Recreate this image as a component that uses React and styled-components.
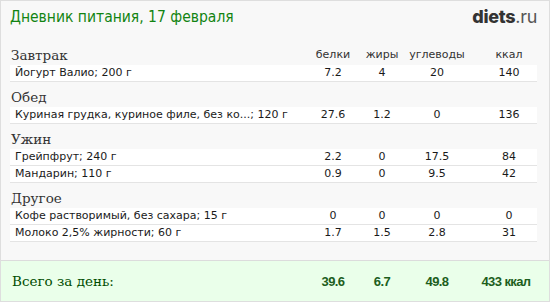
import React from "react";
import styled, { createGlobalStyle } from "styled-components";

const Global = createGlobalStyle`
  html, body { margin: 0; padding: 0; background: #ffffff; }
  * { box-sizing: border-box; }
`;

const Frame = styled.div`
  width: 550px;
  height: 302px;
  border: 1px solid #dedede;
  background: #f8f8f8;
  display: flex;
  flex-direction: column;
  overflow: hidden;
`;

const Header = styled.div`
  display: flex;
  justify-content: space-between;
  align-items: flex-start;
  height: 39px;
  padding: 5px 12px 0 9px;
`;

const Title = styled.h1`
  margin: 0;
  font-family: "DejaVu Sans Condensed", "DejaVu Sans", sans-serif;
  font-weight: normal;
  font-size: 15.5px;
  line-height: 22px;
  color: #128412;
`;

const Logo = styled.div`
  font-family: Inter, "Open Sans", sans-serif;
  font-size: 18px;
  line-height: 22px;
  color: #3a3a3a;
  letter-spacing: -0.3px;
  b { font-weight: 800; color: #333; }
  span { font-weight: 400; color: #555; }
`;

const Content = styled.div`
  padding: 0 12px 0 9px;
`;

const Grid = styled.div`
  display: grid;
  grid-template-columns: 1fr 54px 44px 66px 67px;
  align-items: center;
`;

const SectionHead = styled(Grid)`
  height: 25px;
  padding-top: 6px;
  align-items: start;
`;

const SectionTitle = styled.div`
  font-family: "DejaVu Serif", serif;
  font-size: 13.5px;
  line-height: 18px;
  color: #333;
  padding-left: 1px;
`;

const ColName = styled.div`
  font-family: "DejaVu Sans", Verdana, sans-serif;
  font-size: 11px;
  line-height: 18px;
  color: #333;
  text-align: center;
  padding-left: ${(p) => (p.$last ? "11px" : "0")};
`;

const Row = styled(Grid)`
  height: 17px;
  background: #ffffff;
  border-bottom: 1px solid #e4e4e4;
`;

const Cell = styled.div`
  font-family: "DejaVu Sans", Verdana, sans-serif;
  font-size: 11px;
  line-height: 16px;
  color: #1a1a1a;
  white-space: nowrap;
  text-align: ${(p) => (p.$name ? "left" : "center")};
  padding-left: ${(p) => (p.$name ? "5px" : p.$last ? "11px" : "0")};
`;

const Total = styled(Grid)`
  margin-top: auto;
  height: 41px;
  background: #eaffea;
  border-top: 1px solid #dcdcdc;
  padding: 0 12px 0 9px;
`;

const TotalLabel = styled.div`
  font-family: "DejaVu Serif", serif;
  font-size: 13.5px;
  color: #004d00;
  padding-left: 2px;
`;

const TotalValue = styled.div`
  font-family: "Liberation Sans", Arial, sans-serif;
  font-weight: bold;
  font-size: 13px;
  letter-spacing: -0.6px;
  color: #1d5e1d;
  text-align: center;
  white-space: nowrap;
  padding-left: ${(p) => (p.$last ? "5px" : "0")};
`;

const sections = [
  {
    title: "Завтрак",
    head: true,
    rows: [["Йогурт Валио; 200 г", "7.2", "4", "20", "140"]],
  },
  {
    title: "Обед",
    rows: [["Куриная грудка, куриное филе, без ко...; 120 г", "27.6", "1.2", "0", "136"]],
  },
  {
    title: "Ужин",
    rows: [
      ["Грейпфрут; 240 г", "2.2", "0", "17.5", "84"],
      ["Мандарин; 110 г", "0.9", "0", "9.5", "42"],
    ],
  },
  {
    title: "Другое",
    rows: [
      ["Кофе растворимый, без сахара; 15 г", "0", "0", "0", "0"],
      ["Молоко 2,5% жирности; 60 г", "1.7", "1.5", "2.8", "31"],
    ],
  },
];

export default function App() {
  return (
    <>
      <Global />
      <Frame>
        <Header>
          <Title>Дневник питания, 17 февраля</Title>
          <Logo>
            <b>diets</b>
            <span>.ru</span>
          </Logo>
        </Header>
        <Content>
          {sections.map((s) => (
            <div key={s.title}>
              <SectionHead>
                <SectionTitle>{s.title}</SectionTitle>
                {s.head && (
                  <>
                    <ColName>белки</ColName>
                    <ColName>жиры</ColName>
                    <ColName>углеводы</ColName>
                    <ColName $last>ккал</ColName>
                  </>
                )}
              </SectionHead>
              {s.rows.map((r) => (
                <Row key={r[0]}>
                  <Cell $name>{r[0]}</Cell>
                  <Cell>{r[1]}</Cell>
                  <Cell>{r[2]}</Cell>
                  <Cell>{r[3]}</Cell>
                  <Cell $last>{r[4]}</Cell>
                </Row>
              ))}
            </div>
          ))}
        </Content>
        <Total>
          <TotalLabel>Всего за день:</TotalLabel>
          <TotalValue>39.6</TotalValue>
          <TotalValue>6.7</TotalValue>
          <TotalValue>49.8</TotalValue>
          <TotalValue $last>433 ккал</TotalValue>
        </Total>
      </Frame>
    </>
  );
}
